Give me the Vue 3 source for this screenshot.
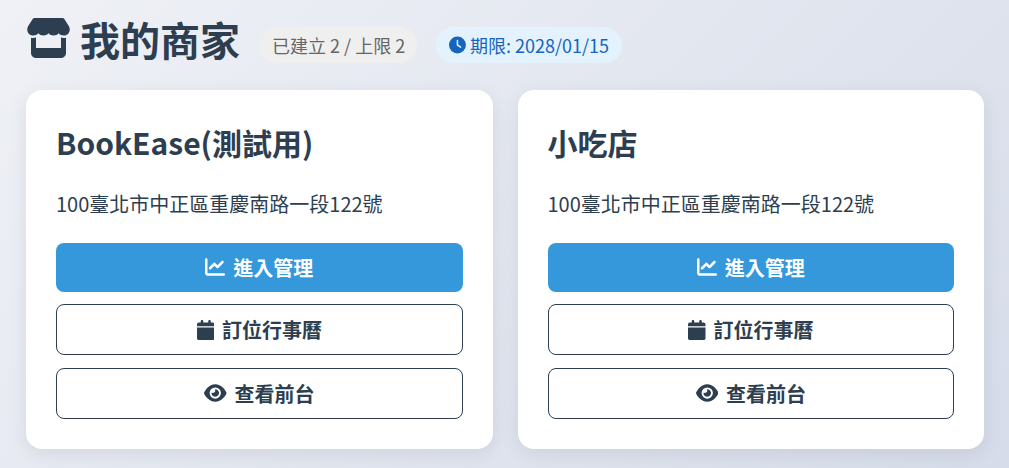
<template>
  <div class="page">
    <div class="page-header">
      <h1 class="page-title">
        <svg class="store-icon" viewBox="0 0 576 512"><path :d="icons.store" /></svg>
        我的商家
      </h1>
      <span class="badge badge-count">已建立 {{ shops.length }} / 上限 2</span>
      <span class="badge badge-expire">
        <svg class="clock-icon" viewBox="0 0 512 512"><path :d="icons.clock" /></svg>
        期限: 2028/01/15
      </span>
    </div>

    <div class="shop-grid">
      <div v-for="shop in shops" :key="shop.name" class="shop-card">
        <h2 class="shop-name">{{ shop.name }}</h2>
        <p class="shop-address">{{ shop.address }}</p>
        <div class="shop-actions">
          <button class="btn btn-primary">
            <svg class="btn-icon" viewBox="0 0 512 512"><path :d="icons.chart" /></svg>
            進入管理
          </button>
          <button class="btn btn-outline">
            <svg class="btn-icon" viewBox="0 0 448 512"><path :d="icons.calendar" /></svg>
            訂位行事曆
          </button>
          <button class="btn btn-outline">
            <svg class="btn-icon eye-icon" viewBox="0 0 576 512"><path :d="icons.eye" /></svg>
            查看前台
          </button>
        </div>
      </div>
    </div>
  </div>
</template>

<script setup>
const shops = [
  { name: 'BookEase(測試用)', address: '100臺北市中正區重慶南路一段122號' },
  { name: '小吃店', address: '100臺北市中正區重慶南路一段122號' }
]

const icons = {
  store: 'M547.6 103.8L490.3 13.1C485.2 5 476.1 0 466.4 0H109.6C99.9 0 90.8 5 85.7 13.1L28.3 103.8c-29.6 46.8-3.4 111.9 51.9 119.4c4 .5 8.1 .8 12.1 .8c26.1 0 49.3-11.4 65.2-29c15.9 17.6 39.1 29 65.2 29c26.1 0 49.3-11.4 65.2-29c15.9 17.6 39.1 29 65.2 29c26.2 0 49.3-11.4 65.2-29c16 17.6 39.1 29 65.2 29c4.1 0 8.1-.3 12.1-.8c55.5-7.4 81.8-72.5 52.1-119.4zM499.7 254.9l-.1 0c-5.3 .7-10.7 1.1-16.2 1.1c-12.4 0-24.3-1.9-35.4-5.3V384H128V250.6c-11.2 3.5-23.2 5.4-35.6 5.4c-5.5 0-11-.4-16.3-1.1l-.1 0c-4.1-.6-8.1-1.3-12-2.3V384v64c0 35.3 28.7 64 64 64H448c35.3 0 64-28.7 64-64V384 252.6c-4 1-8 1.8-12.3 2.3z',
  clock: 'M256 0a256 256 0 1 1 0 512A256 256 0 1 1 256 0zM232 120V256c0 8 4 15.5 10.7 20l96 64c11 7.4 25.9 4.4 33.3-6.7s4.4-25.9-6.7-33.3L280 243.2V120c0-13.3-10.7-24-24-24s-24 10.7-24 24z',
  chart: 'M64 64c0-17.7-14.3-32-32-32S0 46.3 0 64V400c0 44.2 35.8 80 80 80H480c17.7 0 32-14.3 32-32s-14.3-32-32-32H80c-8.8 0-16-7.2-16-16V64zm406.6 86.6c12.5-12.5 12.5-32.8 0-45.3s-32.8-12.5-45.3 0L320 210.7l-57.4-57.4c-12.5-12.5-32.8-12.5-45.3 0l-112 112c-12.5 12.5-12.5 32.8 0 45.3s32.8 12.5 45.3 0L240 221.3l57.4 57.4c12.5 12.5 32.8 12.5 45.3 0l128-128z',
  calendar: 'M96 32V64H48C21.5 64 0 85.5 0 112v48H448V112c0-26.5-21.5-48-48-48H352V32c0-17.7-14.3-32-32-32s-32 14.3-32 32V64H160V32c0-17.7-14.3-32-32-32S96 14.3 96 32zM448 192H0V464c0 26.5 21.5 48 48 48H400c26.5 0 48-21.5 48-48V192z',
  eye: 'M288 32c-80.8 0-145.5 36.8-192.6 80.6C48.6 156 17.3 208 2.5 243.7c-3.3 7.9-3.3 16.7 0 24.6C17.3 304 48.6 356 95.4 399.4C142.5 443.2 207.2 480 288 480s145.5-36.8 192.6-80.6c46.8-43.5 78.1-95.4 93-131.1c3.3-7.9 3.3-16.7 0-24.6c-14.9-35.7-46.2-87.7-93-131.1C433.5 68.8 368.8 32 288 32zM144 256a144 144 0 1 1 288 0 144 144 0 1 1 -288 0zm144-64c0 35.3-28.7 64-64 64c-7.1 0-13.9-1.2-20.3-3.3c-5.5-1.8-11.9 1.6-11.7 7.4c.3 6.9 1.3 13.8 3.2 20.7c13.7 51.2 66.4 81.6 117.6 67.9s81.6-66.4 67.9-117.6c-11.1-41.5-47.8-69.4-88.6-71.1c-5.8-.2-9.2 6.1-7.4 11.7c2.1 6.4 3.3 13.2 3.3 20.3z'
}
</script>

<style>
html,
body {
  margin: 0;
  height: 100%;
  overflow: hidden;
}
</style>

<style scoped>
.page {
  box-sizing: border-box;
  height: 468px;
  padding: 13px 25px 0 26px;
  background: linear-gradient(135deg, #eff1f6 0%, #d6dce9 100%);
  color: #2c3e50;
  font-family: "Noto Sans CJK TC", "Noto Sans", sans-serif;
}

.page-header {
  display: flex;
  align-items: flex-end;
  height: 52px;
  margin-bottom: 25px;
}

.page-title {
  display: flex;
  align-items: center;
  gap: 9px;
  margin: 0 19px 0 0;
  font-size: 40px;
  font-weight: 700;
  line-height: 52px;
}

.store-icon {
  width: 45px;
  height: 40px;
  margin-top: -2px;
  fill: #2c3e50;
}

.badge {
  display: flex;
  align-items: center;
  box-sizing: border-box;
  height: 36px;
  margin-bottom: 2px;
  padding: 0 13px;
  border-radius: 18px;
  font-size: 18px;
  white-space: nowrap;
}

.badge-count {
  width: 158px;
  margin-right: 19px;
  background: #efefef;
  color: #666;
}

.badge-expire {
  width: 186px;
  gap: 4px;
  background: #e3f2fd;
  color: #1565c0;
}

.clock-icon {
  width: 18px;
  height: 18px;
  fill: #1565c0;
}

.shop-grid {
  display: grid;
  grid-template-columns: 1fr 1fr;
  gap: 25px;
}

.shop-card {
  box-sizing: border-box;
  height: 359px;
  padding: 30px;
  background: #fff;
  border-radius: 16px;
  box-shadow: 0 5px 20px rgba(0, 0, 0, 0.08);
}

.shop-name {
  margin: 0 0 26px;
  font-size: 30px;
  font-weight: 700;
  line-height: 45px;
}

.shop-address {
  margin: 0 0 26px;
  font-size: 20px;
  line-height: 26px;
}

.shop-actions {
  display: flex;
  flex-direction: column;
  gap: 12.8px;
}

.btn {
  display: flex;
  align-items: center;
  justify-content: center;
  gap: 8px;
  box-sizing: border-box;
  width: 100%;
  height: 51px;
  border-radius: 8px;
  font-family: inherit;
  font-size: 20px;
  font-weight: 700;
  cursor: pointer;
}

.btn-primary {
  height: 48.6px;
  border: none;
  background: #3498db;
  color: #fff;
}

.btn-outline {
  border: 1px solid #2c3e50;
  background: #fff;
  color: #2c3e50;
}

.btn-icon {
  height: 20px;
  fill: currentColor;
}

.eye-icon {
  margin-top: -2px;
}
</style>
